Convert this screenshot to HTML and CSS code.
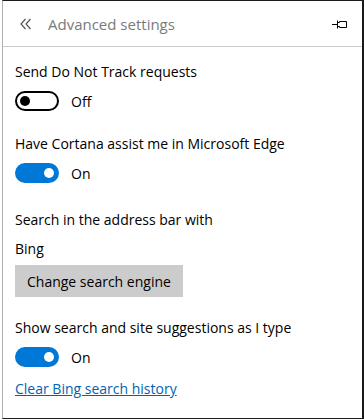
FILE: index.html
```html
<!DOCTYPE html>
<html lang="en">
<head>
  <meta charset="UTF-8" />
  <title>Advanced settings</title>
  <link rel="stylesheet" href="styles.css">
</head>
<body>
  <div class="panel">
    <div class="header">
      <svg class="back" width="12" height="12" viewBox="0 0 12 12">
        <path d="M5.5 1L1 6L5.5 11M10.5 1L6 6L10.5 11" fill="none" stroke="#555" stroke-width="1.2"/>
      </svg>
      <span class="title">Advanced settings</span>
      <svg class="pin" width="16" height="12" viewBox="0 0 16 12">
        <path d="M0 6.5H5M5.5 2.5V10.5M5.5 4.5H7.5V3.5H14.5V9.5H7.5V8.5H5.5" fill="none" stroke="#000" stroke-width="1"/>
      </svg>
    </div>

    <div class="content">
      <div class="setting">
        <p class="label">Send Do Not Track requests</p>
        <div class="toggle-row">
          <span class="toggle"></span>
          <span class="state">Off</span>
        </div>
      </div>

      <div class="setting wide">
        <p class="label">Have Cortana assist me in Microsoft Edge</p>
        <div class="toggle-row">
          <span class="toggle on"></span>
          <span class="state">On</span>
        </div>
      </div>

      <div class="setting">
        <p class="label">Search in the address bar with</p>
        <p class="label engine">Bing</p>
        <button class="btn">Change search engine</button>
      </div>

      <div class="setting last">
        <p class="label">Show search and site suggestions as I type</p>
        <div class="toggle-row">
          <span class="toggle on"></span>
          <span class="state">On</span>
        </div>
      </div>

      <a class="link" href="#">Clear Bing search history</a>
    </div>
  </div>
</body>
</html>
```

FILE: styles.css
```css
body {
  margin: 0;
  background: #fff;
  font-family: 'Open Sans', sans-serif;
  color: #000;
}

.panel {
  box-sizing: border-box;
  width: 362px;
  height: 419px;
  margin-left: 2px;
  border-top: 1px solid #1a1a1a;
  border-right: 2px solid #1a1a1a;
  border-bottom: 1px solid #1a1a1a;
  border-left: 1px solid #b0b0b0;
}

.header {
  display: flex;
  align-items: center;
  height: 45px;
  padding: 0 14px 0 17px;
  border-bottom: 1px solid #ccc;
}

.back {
  margin-right: 16px;
}

.title {
  flex: 1;
  font-size: 15px;
  color: #7a7a7a;
}

.content {
  padding: 15px 12px 0 12px;
}

.setting {
  margin-bottom: 23px;
}

.setting.wide {
  margin-bottom: 27px;
}

.setting.last {
  margin-bottom: 10px;
}

.label {
  margin: 0;
  font-size: 14px;
  line-height: 20px;
}

.engine {
  margin-top: 9px;
}

.toggle-row {
  display: flex;
  align-items: center;
  margin-top: 9px;
}

.toggle {
  box-sizing: border-box;
  position: relative;
  width: 44px;
  height: 20px;
  border: 2px solid #000;
  border-radius: 10px;
}

.toggle::after {
  content: "";
  position: absolute;
  left: 3px;
  top: 3px;
  width: 10px;
  height: 10px;
  border-radius: 50%;
  background: #000;
}

.toggle.on {
  background: #0078d7;
  border-color: #0078d7;
}

.toggle.on::after {
  left: auto;
  right: 3px;
  background: #fff;
}

.state {
  margin-left: 12px;
  font-size: 14px;
}

.btn {
  display: block;
  margin-top: 6px;
  margin-bottom: -2px;
  height: 32px;
  padding: 0 12px;
  border: none;
  background: #cccccc;
  font-family: 'Open Sans', sans-serif;
  font-size: 14px;
  color: #000;
}

.link {
  font-size: 14px;
  color: #0063b1;
}
```
